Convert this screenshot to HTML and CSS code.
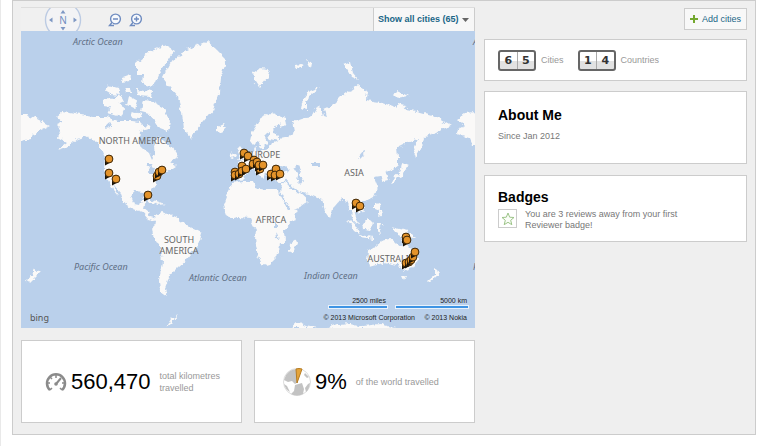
FILE: index.html
```html
<!DOCTYPE html>
<html lang="en">
<head>
<meta charset="utf-8">
<title>Travel map</title>
<link rel="stylesheet" href="styles.css">
</head>
<body>
<main class="panel">
  <section class="main-column">
    <div class="map-box">
      <div class="toolbar">
        <svg class="compass" viewBox="0 0 38 23" aria-label="Compass">
          <circle cx="19" cy="12" r="17.5" fill="#f3f3f5" stroke="#bccbe3" stroke-width="1.4"/>
          <path d="M16.500 5.500L19 2L21.500 5.500ZM16.500 19L19 22.500L21.500 19ZM8.500 9.500V14.500L5 12ZM29.500 9.500V14.500L33 12Z" fill="#7f98c4"/>
          <text class="north" x="19" y="16" text-anchor="middle">N</text>
        </svg>
        <button class="zoom" aria-label="Zoom out"><svg viewBox="0 0 14 14"><circle cx="7.500" cy="6" r="4.900"/><path d="M4 9.500L1.500 12.500H6M5 6H10"/></svg></button>
        <button class="zoom" aria-label="Zoom in"><svg viewBox="0 0 14 14"><circle cx="7.500" cy="6" r="4.900"/><path d="M4 9.500L1.500 12.500H6M5 6H10M7.500 3.500V8.500"/></svg></button>
        <div class="filter">
          <select aria-label="Cities shown"><option>Show all cities (65)</option></select>
          <svg viewBox="0 0 7 4"><path d="M0 0H7L3.500 4Z" fill="#666"/></svg>
        </div>
      </div>
      <svg class="map" viewBox="21 31 454 297" role="img" aria-label="World map with visited cities">
        <defs>
          <filter id="coast" x="0" y="0" width="1" height="1">
            <feTurbulence type="fractalNoise" baseFrequency=".18" numOctaves="3" seed="4"/>
            <feDisplacementMap in="SourceGraphic" scale="6" xChannelSelector="R" yChannelSelector="G"/>
          </filter>
          <g id="pin"><path d="M-4 0L-4 6.500L1.500 3.500Z" fill="#1c1408"/><circle r="3.900" fill="#e4932a" stroke="#3b2405"/></g>
        </defs>
        <g filter="url(#coast)">
          <rect x="11" y="21" width="474" height="317" fill="#bad0eb"/>
          <g fill="#faf9f8">
            <path d="M57 117L63 112L75 114L93 117L107 117L117 121L132 121L140 122L146 128L140 132L139 144L145 150L149 153L152 160L155 154L154 147L156 138L162 137L166 144L170 144L179 158L170 162L176 166L168 171L161 175L158 179L154 187L149 192L149 199L145 191L134 190L131 196L134 204L139 205L141 200L146 200L144 208L148 211L150 217L158 219L155 221L148 219L142 212L131 208L124 203L120 192L113 184L118 196L113 190L107 178L104 169L105 158L101 148L95 141L86 136L77 139L67 147L58 150L67 143L58 138L61 130L56 125L63 122Z"/>
            <path d="M155 215L162 212L175 217L187 225L202 232L200 240L195 249L187 259L178 267L172 273L168 280L165 288L167 297L160 292L159 281L162 261L160 248L153 236L152 229L156 222Z"/>
            <path d="M162 78L170 63L187 50L207 41L217 50L227 60L220 77L219 93L213 110L203 122L195 131L191 138L184 129L182 113L178 97L170 88Z"/>
            <path d="M136 63L150 51L165 46L174 51L165 65L158 75L153 87L143 84L144 75L136 75Z"/>
            <path d="M136 89L153 91L152 97L137 96ZM123 77L131 74L130 81L122 82ZM108 85L119 88L121 95L110 94L105 91ZM103 100L109 97L117 101L125 108L121 117L108 113L111 107L103 106ZM114 98L121 95L124 101L118 104ZM129 96L138 101L135 109L127 105ZM143 101L153 102L164 108L170 121L168 132L160 129L155 121L149 113L141 111ZM132 111L142 113L140 119L130 118ZM147 123L152 126L149 130L144 128ZM124 88L131 88L132 93L126 93Z"/>
            <path d="M217 127L223 124L226 128L222 133L217 131Z"/>
            <path d="M232 183L243 181L253 181L255 188L265 190L279 190L281 195L289 209L298 210L294 219L284 230L285 242L279 247L276 258L270 264L263 266L258 256L255 239L256 230L250 218L238 217L230 219L224 210L223 204L227 193Z"/>
            <path d="M296 239L297 243L293 253L289 251L290 243Z"/>
            <path d="M250 141L252 132L262 117L272 113L285 118L286 125L280 127L281 122L274 130L279 138L289 136L295 132L293 121L305 117L313 116L319 105L323 117L326 118L324 109L331 106L340 97L358 85L367 91L366 100L380 102L398 108L417 111L432 115L451 126L444 128L437 133L425 137L421 149L416 158L413 148L417 139L407 142L397 147L398 157L398 165L393 169L386 172L388 181L384 182L381 176L374 177L378 187L374 197L365 202L361 202L364 209L359 215L354 211L358 224L354 222L350 210L345 199L341 199L336 205L332 209L330 218L325 211L322 200L308 194L299 192L309 201L301 207L291 211L281 193L282 183L270 179L266 172L264 179L258 173L251 170L245 176L241 180L232 178L232 170L241 169L238 162L247 158L253 151L255 147L257 152L269 149L272 143L278 141L270 139L268 132L264 136L268 143L262 149L258 142L253 145Z"/>
            <path d="M240 146L246 154L244 159L237 160L240 155L237 149ZM233 152L236 154L234 158L230 157Z"/>
            <path d="M253 73L260 68L270 69L267 78L259 88L255 82ZM302 109L304 98L309 91L319 87L311 94L306 102L306 110ZM344 64L350 62L353 74L358 80L351 77ZM295 65L301 64L304 66L298 69ZM306 60L313 63L310 68ZM393 94L398 91L408 96L397 98ZM397 104L406 106L403 110L397 108Z"/>
            <path d="M11 115L27 115L38 119L50 125L42 129L38 131L32 134L30 139L21 141H11ZM457 119L466 113L475 112H485V145L472 145L469 138L456 134L458 129L464 126Z"/>
            <path d="M402 163L409 166L404 169L403 176L397 178L391 184L390 181L398 175L401 169ZM375 202L380 205L382 216L378 217L380 210L375 208ZM347 219L354 224L360 234L355 231ZM360 235L374 237L374 239L361 237ZM363 223L369 219L373 223L369 230L364 229ZM377 224L384 224L379 227L381 233L377 231ZM391 227L399 229L408 231L415 238L405 237L396 233Z"/>
            <path d="M368 251L376 246L382 241L390 239L393 241L397 245L402 247L404 237L408 246L415 252L418 260L413 268L404 271L398 265L393 264L384 262L376 265L369 267L367 260ZM402 276L406 276L404 280Z"/>
            <path d="M434 268L440 272L437 276L429 283L427 281L434 275ZM35 268L40 272L36 276L29 283L27 280L33 275ZM166 327L171 319L178 315L172 322ZM290 328L297 322L306 326L317 328ZM325 329L337 324L351 323L363 326L380 324L399 329ZM142 198L151 199L162 203L166 204L158 205L149 201Z"/>
          </g>
          <path d="M273 170L277 165L285 167L290 171L282 173ZM294 168L299 165L301 169L300 175L304 181L301 185L297 181L298 175ZM358 157L365 149L364 155L360 159ZM312 163H320V166H312ZM145 163L153 163L151 167L156 168L154 173L148 173L150 167ZM274 224H277V228H274ZM276 232L279 239H277ZM107 124L112 122L111 127L105 128Z" fill="#bad0eb"/>
          <path d="M280 192L289 209M281 184L285 180L292 188L299 193" fill="none" stroke="#bad0eb" stroke-width="2"/>
        </g>
        <g class="lands" text-anchor="middle">
          <text x="135" y="144">NORTH AMERICA</text>
          <text x="179" y="243">SOUTH</text><text x="179" y="254">AMERICA</text>
          <text x="263" y="158">EUROPE</text><text x="271" y="223">AFRICA</text>
          <text x="354" y="176">ASIA</text><text x="391" y="262">AUSTRALIA</text>
        </g>
        <g class="oceans">
          <text x="73" y="45">Arctic Ocean</text><text x="473" y="45">A</text>
          <text x="74" y="270">Pacific Ocean</text><text x="473" y="270">P</text>
          <text x="189" y="281">Atlantic Ocean</text><text x="304" y="279">Indian Ocean</text>
        </g>
        <g>
          <use href="#pin" x="109" y="159"/><use href="#pin" x="109" y="173"/><use href="#pin" x="116" y="179"/>
          <use href="#pin" x="157" y="176"/><use href="#pin" x="159" y="172"/><use href="#pin" x="162" y="170"/><use href="#pin" x="148" y="195"/>
          <use href="#pin" x="244" y="153"/><use href="#pin" x="248" y="156"/><use href="#pin" x="242" y="166"/>
          <use href="#pin" x="235" y="172"/><use href="#pin" x="235" y="175"/><use href="#pin" x="239" y="174"/><use href="#pin" x="242" y="171"/><use href="#pin" x="246" y="169"/>
          <use href="#pin" x="254" y="160"/><use href="#pin" x="253" y="164"/><use href="#pin" x="257" y="162"/><use href="#pin" x="260" y="169"/><use href="#pin" x="259" y="165"/><use href="#pin" x="263" y="165"/>
          <use href="#pin" x="271" y="174"/><use href="#pin" x="276" y="169"/><use href="#pin" x="275" y="175"/><use href="#pin" x="280" y="174"/>
          <use href="#pin" x="356" y="203"/><use href="#pin" x="360" y="206"/>
          <use href="#pin" x="406" y="237"/><use href="#pin" x="407" y="240"/>
          <use href="#pin" x="406" y="263"/><use href="#pin" x="409" y="262"/><use href="#pin" x="411" y="260"/><use href="#pin" x="413" y="257"/><use href="#pin" x="415" y="252"/>
        </g>
        <path d="M328 307H388M395 307H469" stroke="#e8f2fc" stroke-width="4"/>
        <path d="M329 307H387M396 307H468" stroke="#3f94e4" stroke-width="2"/>
        <g class="credits" text-anchor="end">
          <text x="386" y="303">2500 miles</text><text x="467" y="303">5000 km</text>
          <text x="415" y="320">© 2013 Microsoft Corporation</text><text x="467" y="320">© 2013 Nokia</text>
        </g>
        <text class="bing" x="30" y="321">bing</text>
      </svg>
    </div>
    <div class="stats">
      <div class="card stat">
        <svg class="gauge" viewBox="0 0 22 20" fill="none" stroke="#8b8b8b"><path d="M5 18A9 9 0 1 1 17 18" stroke-width="2.500"/><path d="M2 11H5M20 11H17M5 5L7 7M11 2V6M5 18L7 16M17 18L15 16" stroke-width="1.500"/><path d="M11 12L16 6" stroke-width="2"/><circle cx="11" cy="12" r="1.800" fill="#8b8b8b" stroke="none"/></svg>
        <strong>560,470</strong><span>total kilometres<br>travelled</span>
      </div>
      <div class="card stat world">
        <svg class="globe" viewBox="0 0 28 28"><circle cx="14" cy="14" r="13.500" fill="#fff" stroke="#ddd"/><path d="M3 7Q7 1 14 1L15 14L12 16L9 13L5 14L1 12ZM12 17L19 15L21 21L20 26Q14 29 8 26L11 23ZM1 16L4 18L7 24Q2 21 1 16ZM22 5L26 9L24 10L21 7ZM25 16L27 15Q26 22 23 24L22 20Z" fill="#c3c3c3"/><path d="M14 15L13 1Q16 0 19 1Z" fill="#e5a43a" stroke="#b77c21"/></svg>
        <strong>9%</strong><span>of the world travelled</span>
      </div>
    </div>
  </section>
  <aside class="side-column">
    <button class="add"><svg viewBox="0 0 8 8"><path d="M4 0V8M0 4H8" stroke="#74a82f" stroke-width="2"/></svg>Add cities</button>
    <section class="card counts">
      <span class="digits"><b>6</b><b>5</b></span><span class="count-name">Cities</span>
      <span class="digits"><b>1</b><b>4</b></span><span class="count-name">Countries</span>
    </section>
    <section class="card about"><h2>About Me</h2><p>Since Jan 2012</p></section>
    <section class="card badges">
      <h2>Badges</h2>
      <div class="badge">
        <span class="star"><svg viewBox="0 0 14 14"><path d="M7 1L8.700 5.200L13 5.500L9.700 8.300L10.800 12.700L7 10.300L3.200 12.700L4.300 8.300L1 5.500L5.300 5.200Z" fill="#fafdf7" stroke="#9cc488"/></svg></span>
        <p>You are 3 reviews away from your first<br>Reviewer badge!</p>
      </div>
    </section>
  </aside>
</main>
</body>
</html>
```
FILE: styles.css
```css
* { box-sizing: border-box; }
body {
  margin: 0;
  padding: 0 4px 11px 11px;
  border-left: 1px solid #e9e9e9;
  background: #fff;
  color: #777;
  font: 9px/11px "Liberation Sans", Arial, sans-serif;
}
svg { display: block; }
h2, p { margin: 0; }
button, select { font: inherit; cursor: pointer; }
.panel {
  display: grid;
  grid-template-columns: 454fr 263fr;
  gap: 9px;
  padding: 7px 8px 11px;
  border: 1px solid #ccc;
  background: #efefef;
}
.toolbar {
  display: flex;
  align-items: center;
  height: 23px;
  padding-left: 23px;
  background: #f0f0f0;
  box-shadow: 0 -1px #ddd;
}
.compass { width: 38px; height: 23px; margin-right: 26px; }
.north { font: 10px "Noto Sans", sans-serif; fill: #6f8cc0; }
.zoom { margin-right: 7px; padding: 0; border: 0; background: none; }
.zoom svg { width: 14px; height: 14px; fill: #f8fafd; stroke: #6f8cc0; stroke-width: 1.4; }
.filter {
  display: flex;
  align-items: center;
  height: 23px;
  margin-left: auto;
  padding: 0 5px 0 4px;
  border: 1px solid #ccc;
  border-width: 0 1px;
  background: #f7f7f7;
}
.filter select {
  appearance: none;
  padding: 0;
  border: 0;
  background: none;
  color: #1a6687;
  font-size: 9px;
  font-weight: bold;
}
.filter svg { width: 7px; height: 4px; margin-left: 3px; }
.map { width: 100%; height: auto; }
.lands { font: 9px "Noto Sans", sans-serif; fill: #666; }
.oceans { font: italic 9px "Noto Sans", sans-serif; fill: #5f6f85; }
.credits { font: 7px "Liberation Sans", Arial, sans-serif; fill: #222; }
.bing { font: 9px "Noto Sans", sans-serif; fill: #555; }
.card { border: 1px solid #ccc; background: #fff; }
.stats { display: grid; grid-template-columns: 1fr 1fr; gap: 12px; margin-top: 12px; }
.stat {
  display: flex;
  align-items: center;
  height: 83px;
  padding-left: 23px;
  color: #999;
}
.stat strong { margin: 0 9px 0 4px; color: #000; font-size: 22px; font-weight: normal; }
.stat span { line-height: 12px; }
.gauge { width: 22px; height: 20px; }
.world { padding-left: 28px; }
.globe { width: 28px; height: 28px; }
.side-column { display: flex; flex-direction: column; align-items: stretch; }
.add {
  display: flex;
  align-items: center;
  align-self: flex-end;
  gap: 4px;
  height: 22px;
  padding: 0 5px;
  border: 1px solid #ccc;
  background: #f8f8f8;
  color: #1a6687;
}
.add svg { width: 8px; height: 8px; }
.counts {
  display: flex;
  align-items: center;
  height: 42px;
  margin-top: 9px;
  padding-left: 13px;
  color: #999;
}
.digits {
  display: flex;
  width: 38px;
  height: 21px;
  border: 2px solid #666;
  border-radius: 3px;
  background: linear-gradient(#fff 50%, #e2e2e2 50%);
}
.digits b {
  flex: 1;
  color: #333;
  font: bold 11px/17px "DejaVu Sans", sans-serif;
  text-align: center;
}
.digits b + b { border-left: 1px solid #aaa; }
.count-name { margin: 0 14px 0 5px; }
.about { height: 73px; margin-top: 10px; padding: 14px 13px; }
.badges { height: 67px; margin-top: 11px; padding: 12px 13px; }
h2 { color: #000; font-size: 14px; line-height: 18px; }
.about p { margin-top: 7px; }
.badge { display: flex; gap: 8px; margin-top: 3px; }
.star {
  display: grid;
  place-items: center;
  width: 19px;
  height: 19px;
  border: 1px solid #ccc;
}
.star svg { width: 14px; height: 14px; }
```
